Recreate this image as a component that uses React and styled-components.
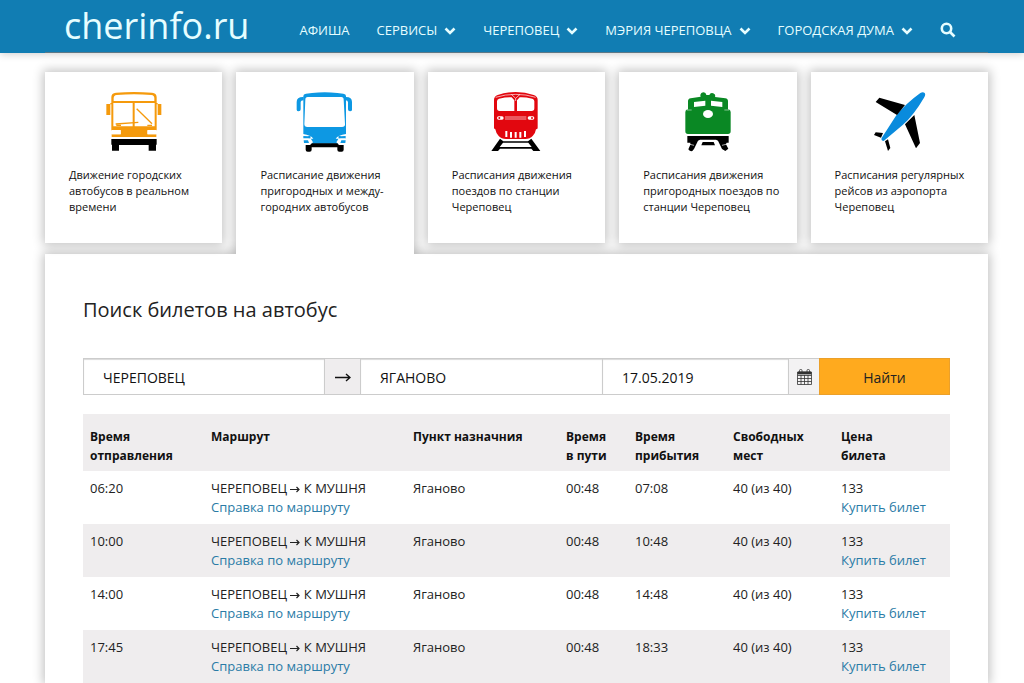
import React from 'react'
import styled, { createGlobalStyle } from 'styled-components'

const menu = [
    { title: 'АФИША' },
    { title: 'СЕРВИСЫ', dropdown: true },
    { title: 'ЧЕРЕПОВЕЦ', dropdown: true },
    { title: 'МЭРИЯ ЧЕРЕПОВЦА', dropdown: true },
    { title: 'ГОРОДСКАЯ ДУМА', dropdown: true },
]

const CityBusIcon = () => (
    <Picture viewBox="192 96 180 180" aria-hidden="true">
        <path
            fill="#f59a0c"
            fillRule="evenodd"
            d="M214 211V112q0-13 14-14 54-4 108 0 14 1 14 14v99zM221 123h122v-8q0-9-9-10-52-4-104 0-9 1-9 10zM220 129v70h58v-70zM284 129v70h60v-70z"
        />
        <path fill="#f59a0c" d="M199 132h12v-3h5v4h-5v32h-12zM364 132h-11v-3h-5v4h5v32h11zM242 205h80v26h-80zM215 223h27v8h-27zM322 223h27v8h-27z" />
        <path fill="#fff" d="M216 210h26v13h-26zM323 210h26v13h-26z" />
        <path stroke="#f59a0c" strokeWidth="4" fill="none" d="M227 192l68-5M290 146l46 45M229 196h14M322 196h14" />
        <path d="M214 237h136v17h-2v18h-22v-17h-89v17h-21v-18h-2z" />
    </Picture>
)

const CoachIcon = () => (
    <Picture viewBox="198 96 180 180" aria-hidden="true">
        <path
            fill="#0d98e3"
            fillRule="evenodd"
            d="M223 240V108q0-6 8-7l18-2q38-4 76 0l18 2q8 1 8 7v132l-3 11h-122zM236 111q-7 0-7 8l-3 73q0 9 9 9h104q10 0 9-9l-4-73q0-8-7-8z"
        />
        <path fill="#0d98e3" d="M224 111q-21-1-21 15v23q0 5 6 5 6 0 6-6v-21q0-6 9-6zM349 111q20-1 20 15v23q0 5-6 5-6 0-6-6v-21q0-6-8-6z" />
        <path fill="#fff" d="M222 222q24 3 31 14h-31zM351 222q-24 3-31 14h31zM222 237h24l6 10-6 5h-24zM351 237h-23l-6 10 6 5h23z" />
        <path fill="#0d98e3" d="M223 228l15 1 4 5h-19zM350 228l-15 1-4 5h19zM224 241h13l3 8h-15zM350 241h-13l-3 8h15z" />
        <circle cx="241" cy="231" r="4" fill="#0d98e3" />
        <circle cx="332" cy="231" r="4" fill="#0d98e3" />
        <path d="M249 250h76l5 5h14v14q0 6-6 6h-7q-6 0-6-6v-7h-77v7q0 6-6 6h-6q-6 0-6-6v-14h13z" />
    </Picture>
)

const TrainIcon = () => (
    <Picture viewBox="186 96 180 180" aria-hidden="true">
        <path
            fill="#e2070f"
            d="M210 120q0-11 11-15 25-9 54-9t54 9q12 4 12 15v83q0 5-5 5-2 13-10 20-8 9-22 9h-58q-14 0-22-9-8-8-10-20-4-1-4-5z"
        />
        <path fill="none" stroke="#fff" strokeWidth="2" d="M215 112q28-9 60-9t60 9M262 103l13 12 13-12M275 115v8" />
        <path fill="#fff" d="M225 116q22-5 38-4l8 9v32h-44q-8 0-8-8v-21q0-6 6-8zM325 116q-22-5-38-4l-8 9v32h44q8 0 8-8v-21q0-6-6-8z" />
        <rect x="219" y="169" width="20" height="10" rx="5" fill="#fff" />
        <rect x="311" y="169" width="20" height="10" rx="5" fill="#fff" />
        <path stroke="#fff" strokeWidth="2" d="M243 171h64M243 177h64" />
        <circle cx="226" cy="174" r="3" fill="#e2070f" />
        <circle cx="324" cy="174" r="3" fill="#e2070f" />
        <path stroke="#fff" strokeWidth="6" d="M247 213v18M261 216v17M275 216v17M289 216v17M303 213v18" />
        <path d="M228 236l10 8h74l10-8 27 37h-21l-6-7h-94l-6 7h-20zM237 248l-10 13h96l-10-13z" fillRule="evenodd" />
    </Picture>
)

const LocomotiveIcon = () => (
    <Picture viewBox="189 96 180 180" aria-hidden="true">
        <path
            fill="#0a8824"
            d="M257 110a9 9 0 1 1 17-5h9a9 9 0 1 1 17 6l31 4q8 1 8 9v24q8 1 8 8v58q0 8-8 8H219q-8 0-8-8v-58q0-7 8-8v-24q0-8 8-9z"
        />
        <path fill="#fff" d="M237 126l34-4v15l-34 4zM322 126l-34-4v15l34 4zM215 149h15v2h-15zM328 149h15v2h-15z" />
        <ellipse cx="279" cy="162" rx="15" ry="12" fill="#fff" />
        <path d="M217 228h124v20h-6l-2 5 7 13-9 7-10-6-12-25-6-3h-48l-6 3-12 25-5 6q-9 2-12-5l6-14v-6h-9z" />
        <path d="M263 246h33l4 10h-41z" />
        <path stroke="#fff" strokeWidth="2" d="M221 252l16 4M337 252l-16 4" />
    </Picture>
)

const PlaneIcon = () => (
    <Picture viewBox="193 96 180 180" aria-hidden="true">
        <path fill="#098bdd" d="M231 234l43-67q30-37 73-68 8-5 13 0 4 5-2 14-31 53-64 82l-57 48q-9 0-6-9z" />
        <path d="M213 126l11-13 77 22-24 30zM329 165l-28 28 33 72 12-16zM208 225l5-8 22 2-6 14zM241 244l9-6 7 26-7 9z" />
    </Picture>
)

const sections = [
    { text: 'Движение городских\nавтобусов в реальном\nвремени', Icon: CityBusIcon },
    { text: 'Расписание движения\nпригородных и между-\nгородних автобусов', Icon: CoachIcon, active: true },
    { text: 'Расписания движения\nпоездов по станции\nЧереповец', Icon: TrainIcon },
    { text: 'Расписания движения\nпригородных поездов по\nстанции Череповец', Icon: LocomotiveIcon },
    { text: 'Расписания регулярных\nрейсов из аэропорта\nЧереповец', Icon: PlaneIcon },
]

const columns = [
    { title: 'Время\nотправления', width: 121 },
    { title: 'Маршрут', width: 202 },
    { title: 'Пункт назначния', width: 153 },
    { title: 'Время\nв пути', width: 69 },
    { title: 'Время\nприбытия', width: 98 },
    { title: 'Свободных\nмест', width: 108 },
    { title: 'Цена\nбилета' },
]

const trips = [
    { departure: '06:20', arrival: '07:08' },
    { departure: '10:00', arrival: '10:48' },
    { departure: '14:00', arrival: '14:48' },
    { departure: '17:45', arrival: '18:33' },
]

function App() {
    return (
        <>
            <GlobalStyle />
            <HeaderMain>
                <HeaderInner>
                    <Logo href="#">cherinfo.ru</Logo>
                    <Menu>
                        {menu.map((item) => (
                            <MenuLink href="#" key={item.title}>
                                {item.title}
                                {item.dropdown && (
                                    <Chevron viewBox="0 0 12 8" aria-hidden="true">
                                        <path d="M1.5 1.5L6 6l4.500-4.500" />
                                    </Chevron>
                                )}
                            </MenuLink>
                        ))}
                        <SearchButton type="button" aria-label="Поиск">
                            <svg width="16" height="16" viewBox="0 0 16 16" aria-hidden="true">
                                <circle cx="6.500" cy="6.500" r="4.700" />
                                <path d="M10 10l4.500 4.500" />
                            </svg>
                        </SearchButton>
                    </Menu>
                </HeaderInner>
            </HeaderMain>
            <Page>
                <Tabs>
                    {sections.map(({ text, Icon, active }) => (
                        <Tab href="#" key={text} $active={active}>
                            <Icon />
                            <TabText>{text}</TabText>
                        </Tab>
                    ))}
                </Tabs>
                <Panel>
                    <Title>Поиск билетов на автобус</Title>
                    <SearchForm onSubmit={(e) => e.preventDefault()}>
                        <Field $size={242} aria-label="Откуда" defaultValue="ЧЕРЕПОВЕЦ" />
                        <Direction>
                            <svg width="16" height="9" viewBox="0 0 16 9" aria-hidden="true">
                                <path d="M0 4.500h15M11 1l4 3.500-4 3.500" />
                            </svg>
                        </Direction>
                        <Field $size={243} aria-label="Куда" defaultValue="ЯГАНОВО" />
                        <Field $size={186} $joined aria-label="Дата" defaultValue="17.05.2019" />
                        <CalendarButton type="button" aria-label="Календарь">
                            <svg width="15" height="16" viewBox="0 0 15 16" aria-hidden="true">
                                <path d="M.5 3h14v12.500H.5zM.5 6.500h14M.5 9.500h14M.5 12.500h14M4 6v9.500M7.500 6v9.500M11 6v9.500" />
                                <path fill="#333" d="M1 3h13v2H1z" />
                                <rect x="2.500" y=".5" width="2.500" height="4" rx="1" />
                                <rect x="10" y=".5" width="2.500" height="4" rx="1" />
                            </svg>
                        </CalendarButton>
                        <SubmitButton type="submit">Найти</SubmitButton>
                    </SearchForm>
                    <Timetable>
                        <colgroup>
                            {columns.map((column) => (
                                <col key={column.title} width={column.width} />
                            ))}
                        </colgroup>
                        <thead>
                            <tr>
                                {columns.map((column) => (
                                    <HeadCell key={column.title}>{column.title}</HeadCell>
                                ))}
                            </tr>
                        </thead>
                        <tbody>
                            {trips.map((trip) => (
                                <TripRow key={trip.departure}>
                                    <Cell>{trip.departure}</Cell>
                                    <Cell>
                                        ЧЕРЕПОВЕЦ <Arrow /> К МУШНЯ
                                        <CellLink href="#">Справка по маршруту</CellLink>
                                    </Cell>
                                    <Cell>Яганово</Cell>
                                    <Cell>00:48</Cell>
                                    <Cell>{trip.arrival}</Cell>
                                    <Cell>40 (из 40)</Cell>
                                    <Cell>
                                        133
                                        <CellLink href="#">Купить билет</CellLink>
                                    </Cell>
                                </TripRow>
                            ))}
                        </tbody>
                    </Timetable>
                </Panel>
            </Page>
        </>
    )
}

export default App

const Arrow = () => (
    <ArrowPicture viewBox="0 0 10 7" role="img" aria-label="→">
        <path d="M0 3.500h9M6.500 1L9 3.500 6.500 6" />
    </ArrowPicture>
)

const GlobalStyle = createGlobalStyle`
    * {
        box-sizing: border-box;
    }

    body {
        margin: 0;
        background: #fff;
        color: #111;
        font-family: 'Open Sans', 'Noto Sans', sans-serif;
        font-size: 13px;
    }

    a {
        text-decoration: none;
    }
`
const HeaderMain = styled.header`
    background: #117db3;
    padding: 0 36px 0 45px;
    box-shadow: 0 1px 8px rgba(0, 0, 0, 0.2);
`
const HeaderInner = styled.div`
    display: flex;
    align-items: center;
    gap: 50px;
    height: 53px;
    padding: 0 32px 0 19px;
    border-bottom: 1px solid #5c7886;
`
const Logo = styled.a`
    color: #e6fdff;
    font-size: 36px;
    line-height: 50px;
`
const Menu = styled.nav`
    flex: 1;
    display: flex;
    align-items: center;
    justify-content: space-between;
    padding-top: 7px;
`
const MenuLink = styled.a`
    display: flex;
    align-items: center;
    gap: 7px;
    color: #e6fdff;
    font-size: 13px;
    line-height: 18px;
    white-space: nowrap;
`
const Chevron = styled.svg`
    width: 12px;
    height: 8px;
    margin-top: 3px;
    fill: none;
    stroke: #e6fdff;
    stroke-width: 2.6;
`
const SearchButton = styled.button`
    display: flex;
    padding: 0;
    border: 0;
    background: none;

    svg {
        fill: none;
        stroke: #e6fdff;
        stroke-width: 2.6;
    }
`
const Page = styled.main`
    padding: 19px 36px 0 45px;
`
const Tabs = styled.div`
    display: grid;
    grid-template-columns: repeat(5, 1fr);
    gap: 14px;
`
const Tab = styled.a`
    position: relative;
    z-index: 1;
    display: flex;
    flex-direction: column;
    gap: 15px;
    min-height: 171px;
    margin-bottom: ${(props) => (props.$active ? 0 : 11)}px;
    padding: 20px 0 24px;
    background: #fff;
    color: #111;
    box-shadow: 0 0 10px 2px rgba(0, 0, 0, 0.24);
    ${(props) => props.$active && 'clip-path: inset(-14px -14px 0 -14px);'}
`
const Picture = styled.svg`
    align-self: center;
    width: 60px;
    height: 60px;
`
const TabText = styled.span`
    padding-left: 24px;
    font-size: 11px;
    line-height: 16px;
    white-space: pre;
`
const Panel = styled.section`
    padding: 42px 38px 0;
    background: #fff;
    box-shadow: 0 0 10px 2px rgba(0, 0, 0, 0.24);
`
const Title = styled.h1`
    margin: 0 0 34px;
    color: #222;
    font-size: 20px;
    font-weight: 400;
    line-height: 28px;
`
const SearchForm = styled.form`
    display: flex;
    height: 37px;
    margin-bottom: 19px;
`
const Field = styled.input`
    flex: 1 1 ${(props) => props.$size}px;
    width: 0;
    min-width: 0;
    padding: 2px 19px 0;
    border: 1px solid #ccc;
    border-left-width: ${(props) => (props.$joined ? 0 : 1)}px;
    border-radius: 0;
    background: #fff;
    box-shadow: inset 0 1px 1px rgba(0, 0, 0, 0.15);
    color: #111;
    font: 14px 'Open Sans', 'Noto Sans', sans-serif;
`
const Direction = styled.div`
    flex: 0 0 35px;
    display: flex;
    align-items: center;
    justify-content: center;
    padding-top: 2px;
    background: #efedee;
    border: solid #ccc;
    border-width: 1px 0;

    svg {
        fill: none;
        stroke: #111;
        stroke-width: 1.4;
    }
`
const CalendarButton = styled.button`
    flex: 0 0 30px;
    display: flex;
    align-items: center;
    justify-content: center;
    padding: 0;
    background: #f3f2f3;
    border: solid #ccc;
    border-width: 1px 0;

    svg {
        fill: none;
        stroke: #333;
        stroke-width: 0.8;
    }
`
const SubmitButton = styled.button`
    flex: 0 0 131px;
    padding: 2px 0 0;
    border: 1px solid #eba02a;
    background: #ffaa1e;
    color: #222;
    font: 14px 'Open Sans', 'Noto Sans', sans-serif;
`
const Timetable = styled.table`
    width: 100%;
    table-layout: fixed;
    border-collapse: collapse;
    line-height: 19px;
`
const HeadCell = styled.th`
    padding: 13px 0 6px 7px;
    background: #efedee;
    font-size: 12px;
    font-weight: 700;
    text-align: left;
    vertical-align: top;
    white-space: pre-line;
`
const TripRow = styled.tr`
    &:nth-child(even) {
        background: #efedee;
    }
`
const Cell = styled.td`
    padding: 8px 0 7px 7px;
    color: #222;
    font-size: 13px;
    vertical-align: top;
    white-space: nowrap;
`
const CellLink = styled.a`
    display: block;
    color: #2a7ba6;
`
const ArrowPicture = styled.svg`
    width: 10px;
    height: 7px;
    fill: none;
    stroke: #222;
    stroke-width: 1.2;
`
